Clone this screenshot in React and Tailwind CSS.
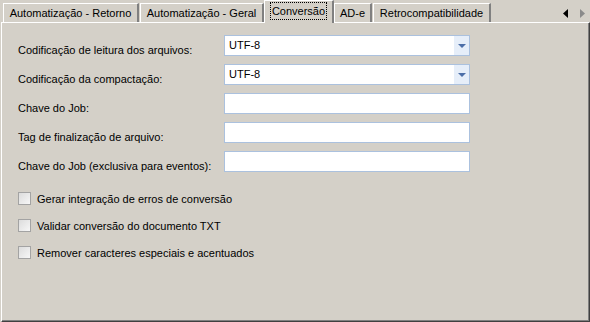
import React from 'react';

const tabs = [
  { label: 'Automatização - Retorno', w: 'w-[136px]', ml: 'ml-[3px]' },
  { label: 'Automatização - Geral', w: 'w-[124px]', ml: 'ml-[1px]' },
  { label: 'Conversão', w: 'w-[70px]', ml: 'ml-0', active: true },
  { label: 'AD-e', w: 'w-[38px]', ml: 'ml-0' },
  { label: 'Retrocompatibilidade', w: 'w-[118px]', ml: 'ml-[1px]' },
];

const fields = [
  { label: 'Codificação de leitura dos arquivos:', combo: true, value: 'UTF-8' },
  { label: 'Codificação da compactação:', combo: true, value: 'UTF-8' },
  { label: 'Chave do Job:' },
  { label: 'Tag de finalização de arquivo:' },
  { label: 'Chave do Job (exclusiva para eventos):' },
];

const checks = [
  'Gerar integração de erros de conversão',
  'Validar conversão do documento TXT',
  'Remover caracteres especiais e acentuados',
];

const Tab = ({ tab }) => {
  if (tab.active) {
    return (
      <div className={`${tab.w} ${tab.ml} h-[23px] -mb-px relative z-10 bg-[#d4d0c8] border-l border-t border-white border-r-2 border-r-[#808080] flex items-start justify-center pt-[2px]`}>
        <span className="px-[1px] leading-[16px] outline outline-1 outline-dotted outline-black">
          {tab.label}
        </span>
      </div>
    );
  }
  return (
    <div className={`${tab.w} ${tab.ml} h-[19px] bg-[#d4d0c8] border-l border-t border-white border-r-2 border-r-[#808080] flex items-center justify-center`}>
      <span className="leading-[14px]">{tab.label}</span>
    </div>
  );
};

const Field = ({ field }) => (
  <div className="flex items-start h-[21px]">
    <div className="w-[206px] pt-[9px] leading-[13px] whitespace-nowrap">{field.label}</div>
    <div className="w-[246px] h-[21px] bg-white border border-[#abc1de] flex items-stretch">
      <div className="flex-1 pl-[4px] leading-[19px]">{field.value || ''}</div>
      {field.combo && (
        <div className="w-[15px] bg-[#e6eef9] flex items-center justify-center">
          <svg width="8" height="4" viewBox="0 0 8 4">
            <path d="M0 0h8L4 4z" fill="#4d6fa8" />
          </svg>
        </div>
      )}
    </div>
  </div>
);

const Check = ({ label }) => (
  <div className="flex items-center h-[13px]">
    <div className="w-[13px] h-[13px] border border-[#a3a3a3] bg-gradient-to-br from-[#dcdcdc] to-[#f7f7f7] shrink-0" />
    <span className="ml-[6px] leading-[14px] whitespace-nowrap">{label}</span>
  </div>
);

export default function App() {
  return (
    <div
      className="w-[590px] h-[322px] bg-[#d4d0c8] flex flex-col text-[11px] text-black overflow-hidden"
      style={{ fontFamily: '"Liberation Sans", Arial, sans-serif' }}
    >
      <div className="h-[22px] flex items-end shrink-0 relative">
        {tabs.map((t) => (
          <Tab key={t.label} tab={t} />
        ))}
        <div className="ml-auto mr-[5px] self-end mb-[4px] flex items-center gap-[12px]">
          <svg width="5" height="9" viewBox="0 0 5 9">
            <path d="M5 0v9L0 4.5z" fill="#000" />
          </svg>
          <svg width="5" height="9" viewBox="0 0 5 9">
            <path d="M0 0v9l5-4.5z" fill="#8a8a8a" />
          </svg>
        </div>
      </div>
      <div className="flex-1 ml-[1px] border-l border-t border-white border-r border-b border-r-[#404040] border-b-[#404040] shadow-[inset_-1px_-1px_#808080] pl-[16px] pt-[12px]">
        <div className="flex flex-col gap-[8px]">
          {fields.map((f) => (
            <Field key={f.label} field={f} />
          ))}
        </div>
        <div className="flex flex-col gap-[14px] mt-[20px]">
          {checks.map((c) => (
            <Check key={c} label={c} />
          ))}
        </div>
      </div>
    </div>
  );
}
